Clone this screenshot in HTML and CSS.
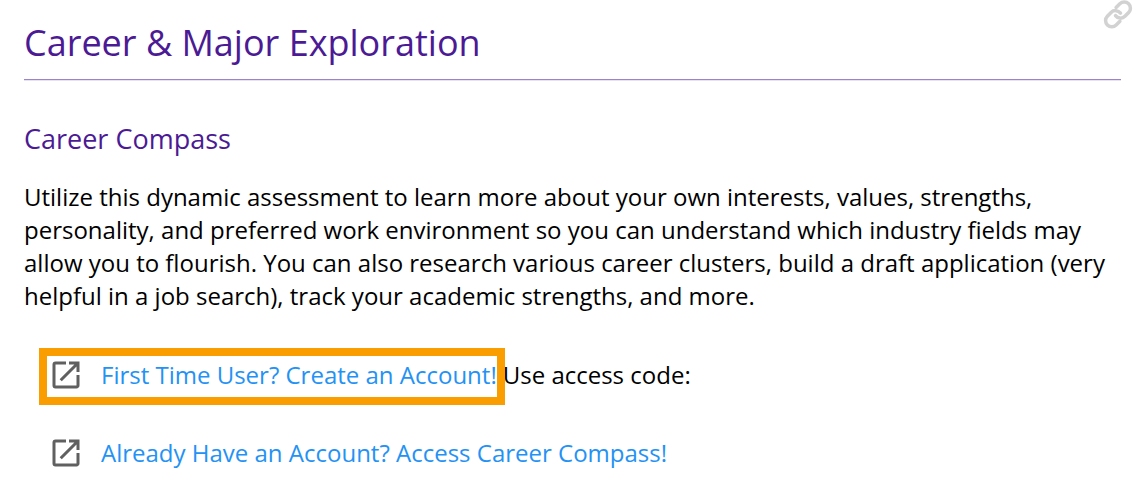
FILE: index.html
```
<!DOCTYPE html>
<html lang="en">
<head>
  <meta charset="UTF-8" />
  <meta name="viewport" content="width=device-width, initial-scale=1.0"/>
  <title>Career &amp; Major Exploration</title>
  <link rel="stylesheet" href="styles.css">
</head>
<body>

  <main class="section">
    <header class="section-header">
      <h1 class="section-title">Career &amp; Major Exploration</h1>
      <a class="anchor-link" href="#career-major-exploration" aria-label="Link to this section">
        <svg width="30" height="30" viewBox="0 0.5 24 24" fill="none" stroke="#d2d2d2" stroke-width="2.8" stroke-linecap="round">
          <path d="M10 13a5 5 0 0 0 7.540.540l3-3a5 5 0 0 0-7.070-7.070l-3 3"/>
          <path d="M14 11a5 5 0 0 0-7.540-.540l-3 3a5 5 0 0 0 7.070 7.070l3-3"/>
        </svg>
      </a>
    </header>

    <h2 class="subtitle">Career Compass</h2>
    <p class="description">Utilize this dynamic assessment to learn more about your own interests, values, strengths, personality, and preferred work environment so you can understand which industry fields may allow you to flourish. You can also research various career clusters, build a draft application (very helpful in a job search), track your academic strengths, and more.</p>

    <ul class="links">
      <li>
        <a class="link highlight" href="#create-account">
          <svg width="36" height="36" viewBox="0 0 24 24" fill="#606060"><path d="M19 19H5V5h7V3H5a2 2 0 0 0-2 2v14a2 2 0 0 0 2 2h14c1.1 0 2-.9 2-2v-7h-2v7zM14 3v2h3.590l-9.830 9.830 1.410 1.410L19 6.410V10h2V3h-7z"/></svg>
          First Time User? Create an Account!</a>
        <span class="access-code">Use access code:</span>
      </li>
      <li>
        <a class="link" href="#career-compass">
          <svg width="36" height="36" viewBox="0 0 24 24" fill="#606060"><path d="M19 19H5V5h7V3H5a2 2 0 0 0-2 2v14a2 2 0 0 0 2 2h14c1.1 0 2-.9 2-2v-7h-2v7zM14 3v2h3.590l-9.830 9.830 1.410 1.410L19 6.410V10h2V3h-7z"/></svg>
          Already Have an Account? Access Career Compass!</a>
      </li>
    </ul>
  </main>

</body>
</html>
```
FILE: styles.css
```
* {
  box-sizing: border-box;
  margin: 0;
  padding: 0;
}

body {
  font-family: "Open Sans", sans-serif;
  font-size: 24px;
  line-height: 33px;
  background-color: #fff;
  color: #000;
}

.section {
  padding: 0 24px 16px;
}

/* HEADER */
.section-header {
  position: relative;
  padding: 17px 0 11px;
  border-bottom: 1px solid #9a84cc;
  box-shadow: 0 1px 0 #e6e2ee;
}

.section-title {
  font-size: 36px;
  line-height: 51px;
  font-weight: 400;
  color: #4b1a94;
}

.anchor-link {
  position: absolute;
  top: 0;
  right: -12px;
  line-height: 0;
}

.subtitle {
  margin: 41px 0 23px;
  font-size: 27px;
  line-height: 36px;
  font-weight: 400;
  color: #4b1a94;
}

.description {
  margin-bottom: 36px;
}

/* LINKS */
.links {
  display: flex;
  flex-direction: column;
  gap: 21px;
  padding-left: 15px;
  line-height: 35px;
  list-style: none;
}

.links li {
  display: flex;
}

.link {
  display: flex;
  position: relative;
  gap: 17px;
  padding: 1px 0 4px 1px;
  border: 8px solid transparent;
  color: #2492f4;
  text-decoration: none;
}

.link:hover {
  text-decoration: underline;
}

/* orange box around the sign up link */
.highlight {
  border-color: #f99d00;
}

.access-code {
  margin-left: -2px;
  padding-top: 9px;
}
```
